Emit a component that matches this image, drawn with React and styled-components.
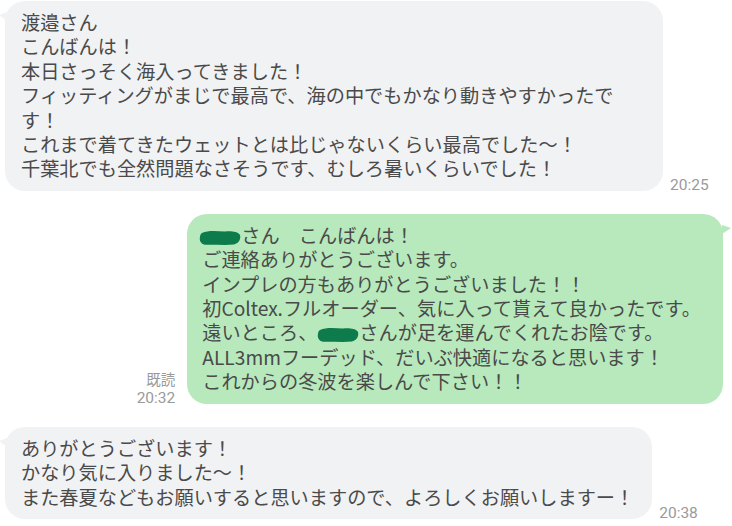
import React from "react";
import styled, { createGlobalStyle, css } from "styled-components";

const Global = createGlobalStyle`
  html, body { margin: 0; padding: 0; background: #ffffff; }
  body { font-family: "Noto Sans CJK JP", "Noto Sans", sans-serif; }
`;

const Chat = styled.div`
  width: 732px;
  height: 526px;
  box-sizing: border-box;
  padding: 1px 9px 0 5px;
  display: flex;
  flex-direction: column;
  gap: 23px;
  overflow: hidden;
`;

const Row = styled.div`
  display: flex;
  align-items: flex-end;
  justify-content: ${(p) => (p.$mine ? "flex-end" : "flex-start")};
  gap: ${(p) => (p.$mine ? "12px" : "7px")};
`;

const Bubble = styled.div`
  position: relative;
  box-sizing: border-box;
  max-width: 658px;
  width: fit-content;
  padding: ${(p) => (p.$mine ? "9px 22px 10px 15px" : "9px 18px 10px 16px")};
  border-radius: 20px;
  background: ${(p) => (p.$mine ? "#b7e9bc" : "#f1f2f4")};
  color: #4a4a4a;
  font-size: 19.2px;
  line-height: 24.4px;
  line-break: strict;

  &::before {
    content: "";
    position: absolute;
    top: 11px;
    ${(p) =>
      p.$mine
        ? css`
            right: -8px;
            border-left: 9px solid #b7e9bc;
            border-top: 3px solid transparent;
            border-bottom: 6px solid transparent;
          `
        : css`
            left: -6px;
            border-right: 8px solid #f1f2f4;
            border-top: 3px solid transparent;
            border-bottom: 6px solid transparent;
          `}
  }
`;

const Line = styled.div`
  display: block;
`;

const Meta = styled.div`
  display: flex;
  flex-direction: column;
  align-items: flex-end;
  font-family: Roboto, "Noto Sans CJK JP", sans-serif;
  font-size: 15.5px;
  line-height: 18px;
  color: #9a9a9a;
  margin-bottom: -3px;
`;

const ReadMark = styled.span`
  font-family: "Noto Sans CJK JP", sans-serif;
  font-size: 14.5px;
  line-height: 18px;
  margin-bottom: 1px;
`;

const Redact = styled.svg`
  display: inline-block;
  width: 42px;
  height: 17px;
  vertical-align: -3px;
  margin-left: ${(p) => p.$ml || 0}px;
`;

function Blob(props) {
  return (
    <Redact viewBox="0 0 42 17" {...props}>
      <path
        d="M3 4 C9 1 18 2 26 2.5 C32 2 39 2.5 41 6 C42 10 40 14 35 15.5 C27 16.5 16 15.5 8 15.8 C3 16 0.5 13 0.8 9 C1 6.5 1.5 5 3 4 Z"
        fill="#0d7b4b"
      />
    </Redact>
  );
}

function Lines({ items }) {
  return items.map((t, i) => <Line key={i}>{t}</Line>);
}

export default function App() {
  return (
    <>
      <Global />
      <Chat>
        <Row>
          <Bubble>
            <Lines
              items={[
                "渡邉さん",
                "こんばんは！",
                "本日さっそく海入ってきました！",
                "フィッティングがまじで最高で、海の中でもかなり動きやすかったです！",
                "これまで着てきたウェットとは比じゃないくらい最高でした～！",
                "千葉北でも全然問題なさそうです、むしろ暑いくらいでした！",
              ]}
            />
          </Bubble>
          <Meta>20:25</Meta>
        </Row>
        <Row $mine>
          <Meta>
            <ReadMark>既読</ReadMark>
            <span>20:32</span>
          </Meta>
          <Bubble $mine>
            <Line>
              <Blob $ml={-3} />
              さん　こんばんは！
            </Line>
            <Lines
              items={[
                "ご連絡ありがとうございます。",
                "インプレの方もありがとうございました！！",
                "初Coltex.フルオーダー、気に入って貰えて良かったです。",
              ]}
            />
            <Line>
              遠いところ、
              <Blob />
              さんが足を運んでくれたお陰です。
            </Line>
            <Lines
              items={[
                "ALL3mmフーデッド、だいぶ快適になると思います！",
                "これからの冬波を楽しんで下さい！！",
              ]}
            />
          </Bubble>
        </Row>
        <Row>
          <Bubble>
            <Lines
              items={[
                "ありがとうございます！",
                "かなり気に入りました～！",
                "また春夏などもお願いすると思いますので、よろしくお願いしますー！",
              ]}
            />
          </Bubble>
          <Meta>20:38</Meta>
        </Row>
      </Chat>
    </>
  );
}
